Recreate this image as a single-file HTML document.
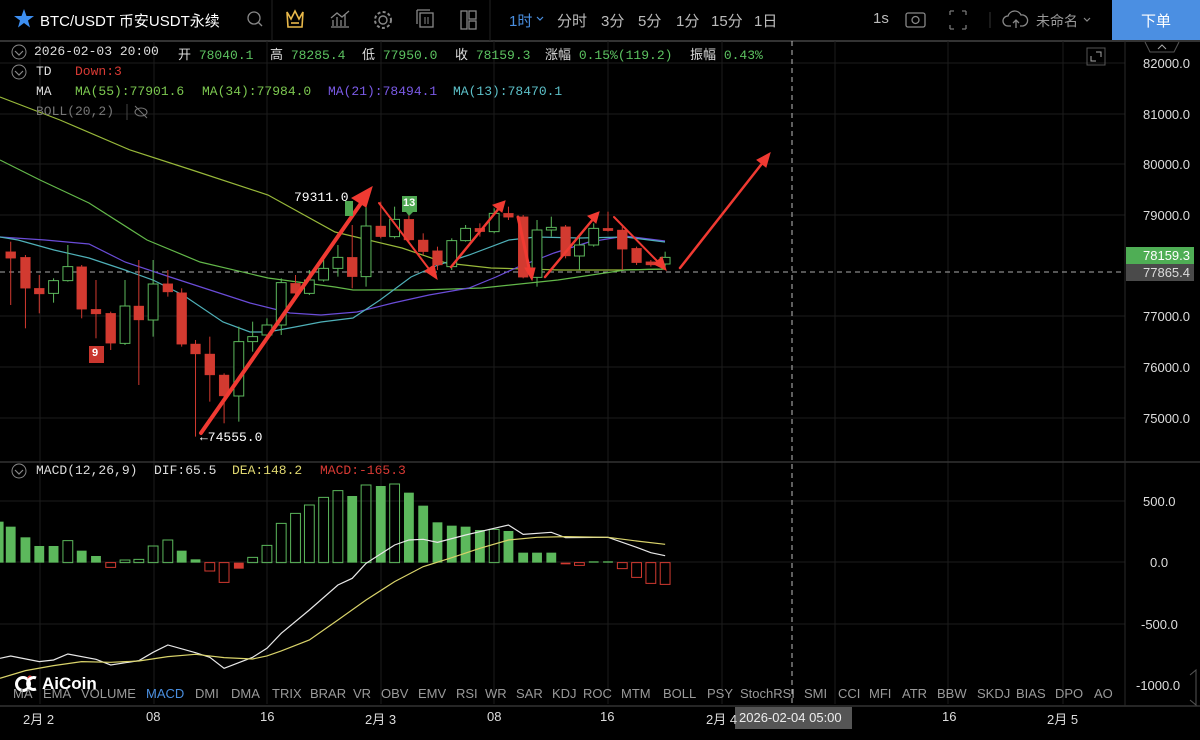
<!DOCTYPE html>
<html><head><meta charset="utf-8"><style>
*{margin:0;padding:0;box-sizing:border-box}
body{width:1200px;height:740px;background:#000;overflow:hidden;position:relative;font-family:"Liberation Sans","Noto Sans CJK SC",sans-serif;color:#ccc}
.a{position:absolute;white-space:nowrap}
.m{font-family:"Liberation Mono","Noto Sans CJK SC",monospace;font-size:13px}
.top{font-size:15px;color:#bbb}
.g{color:#5cc260}
.tab{font-size:13px;color:#9a9a9a;top:686px}
.ax{font-size:13px;color:#ddd;left:1143px}
.tl{font-size:13px;color:#ddd;top:709px}
</style></head><body>
<svg class="a" style="left:0;top:0" width="1200" height="740">
<!-- top bar borders -->
<line x1="0" y1="41" x2="1200" y2="41" stroke="#333" stroke-width="2"/>
<line x1="272" y1="0" x2="272" y2="41" stroke="#222"/>
<line x1="490" y1="0" x2="490" y2="41" stroke="#222"/>
<!-- grid -->
<g stroke="#1c1c1c" stroke-width="1">
<line x1="0" y1="63" x2="1125" y2="63"/><line x1="0" y1="114" x2="1125" y2="114"/><line x1="0" y1="164" x2="1125" y2="164"/><line x1="0" y1="215" x2="1125" y2="215"/><line x1="0" y1="316" x2="1125" y2="316"/><line x1="0" y1="367" x2="1125" y2="367"/><line x1="0" y1="418" x2="1125" y2="418"/>
<line x1="0" y1="501" x2="1125" y2="501"/><line x1="0" y1="562" x2="1125" y2="562"/><line x1="0" y1="624" x2="1125" y2="624"/>
<line x1="40" y1="41" x2="40" y2="704"/><line x1="154" y1="41" x2="154" y2="704"/><line x1="267" y1="41" x2="267" y2="704"/><line x1="381" y1="41" x2="381" y2="704"/><line x1="494" y1="41" x2="494" y2="704"/><line x1="608" y1="41" x2="608" y2="704"/><line x1="722" y1="41" x2="722" y2="704"/><line x1="835" y1="41" x2="835" y2="704"/><line x1="948" y1="41" x2="948" y2="704"/><line x1="1063" y1="41" x2="1063" y2="704"/>
</g>
<line x1="0" y1="462" x2="1200" y2="462" stroke="#333" stroke-width="1.5"/>
<line x1="0" y1="706" x2="1200" y2="706" stroke="#333" stroke-width="1.5"/>
<line x1="1125" y1="41" x2="1125" y2="706" stroke="#2a2a2a"/>
<line x1="792" y1="41" x2="792" y2="704" stroke="#bbb" stroke-dasharray="5,4"/>
<line x1="0" y1="272" x2="1125" y2="272" stroke="#aaa" stroke-dasharray="5,4"/>
<!-- MA lines -->
<g fill="none" stroke-width="1.2">
<polyline stroke="#98b83a" points="0,97 60,120 130,150 192,170 268,195 335,232 402,248 446,263 491,268 560,270 620,270 665,269"/>
<polyline stroke="#63b84a" points="0,160 40,180 89,203 147,240 200,262 268,278 335,287 353,290 420,290 482,288 558,280 625,270 665,269"/>
<polyline stroke="#6a4cd8" points="0,237 45,240 89,244 125,262 170,277 210,290 250,303 290,313 321,315 357,312 393,303 429,295 469,288 496,277 518,267 554,253 589,242 625,236 665,241"/>
<polyline stroke="#4fb0b8" points="0,237 18,240 54,250 89,258 125,270 153,280 183,295 223,322 250,332 268,332 295,327 321,322 353,318 380,300 411,277 438,265 469,255 509,240 536,237 580,238 625,237 665,242"/>
</g>
<!-- candles: x/2.24, y/3+170 -->
<g transform="translate(0,170) scale(0.4464,0.3333)">
<g stroke="#d23a30" fill="#d23a30">
<line x1="24" y1="215" x2="24" y2="405" vector-effect="non-scaling-stroke"/><rect x="13" y="245" width="22" height="20"/>
<line x1="57" y1="255" x2="57" y2="475" vector-effect="non-scaling-stroke"/><rect x="46" y="262" width="22" height="93"/>
<line x1="88" y1="315" x2="88" y2="430" vector-effect="non-scaling-stroke"/><rect x="77" y="355" width="22" height="17"/>
<line x1="183" y1="285" x2="183" y2="445" vector-effect="non-scaling-stroke"/><rect x="172" y="290" width="22" height="128"/>
<line x1="215" y1="330" x2="215" y2="505" vector-effect="non-scaling-stroke"/><rect x="204" y="418" width="22" height="14"/>
<line x1="248" y1="425" x2="248" y2="540" vector-effect="non-scaling-stroke"/><rect x="237" y="430" width="22" height="90"/>
<line x1="311" y1="270" x2="311" y2="645" vector-effect="non-scaling-stroke"/><rect x="300" y="408" width="22" height="42"/>
<line x1="376" y1="300" x2="376" y2="380" vector-effect="non-scaling-stroke"/><rect x="365" y="341" width="22" height="25"/>
<line x1="407" y1="355" x2="407" y2="530" vector-effect="non-scaling-stroke"/><rect x="396" y="368" width="22" height="155"/>
<line x1="438" y1="510" x2="438" y2="800" vector-effect="non-scaling-stroke"/><rect x="427" y="522" width="22" height="30"/>
<line x1="470" y1="500" x2="470" y2="695" vector-effect="non-scaling-stroke"/><rect x="459" y="552" width="22" height="63"/>
<line x1="502" y1="610" x2="502" y2="760" vector-effect="non-scaling-stroke"/><rect x="491" y="615" width="22" height="63"/>
<line x1="662" y1="315" x2="662" y2="375" vector-effect="non-scaling-stroke"/><rect x="651" y="340" width="22" height="30"/>
<line x1="789" y1="165" x2="789" y2="355" vector-effect="non-scaling-stroke"/><rect x="778" y="262" width="22" height="58"/>
<line x1="853" y1="95" x2="853" y2="205" vector-effect="non-scaling-stroke"/><rect x="842" y="168" width="22" height="32"/>
<line x1="916" y1="130" x2="916" y2="215" vector-effect="non-scaling-stroke"/><rect x="905" y="148" width="22" height="62"/>
<line x1="948" y1="190" x2="948" y2="255" vector-effect="non-scaling-stroke"/><rect x="937" y="210" width="22" height="35"/>
<line x1="980" y1="230" x2="980" y2="300" vector-effect="non-scaling-stroke"/><rect x="969" y="242" width="22" height="43"/>
<line x1="1075" y1="160" x2="1075" y2="200" vector-effect="non-scaling-stroke"/><rect x="1064" y="175" width="22" height="10"/>
<line x1="1139" y1="110" x2="1139" y2="150" vector-effect="non-scaling-stroke"/><rect x="1128" y="130" width="22" height="12"/>
<line x1="1172" y1="135" x2="1172" y2="325" vector-effect="non-scaling-stroke"/><rect x="1161" y="140" width="22" height="182"/>
<line x1="1267" y1="165" x2="1267" y2="265" vector-effect="non-scaling-stroke"/><rect x="1256" y="170" width="22" height="88"/>
<line x1="1362" y1="125" x2="1362" y2="185" vector-effect="non-scaling-stroke"/><rect x="1351" y="175" width="22" height="7"/>
<line x1="1394" y1="170" x2="1394" y2="300" vector-effect="non-scaling-stroke"/><rect x="1383" y="180" width="22" height="58"/>
<line x1="1426" y1="230" x2="1426" y2="285" vector-effect="non-scaling-stroke"/><rect x="1415" y="235" width="22" height="43"/>
<line x1="1458" y1="270" x2="1458" y2="290" vector-effect="non-scaling-stroke"/><rect x="1447" y="275" width="22" height="10"/>
</g>
<g stroke="#5cb85c" fill="#000" vector-effect="non-scaling-stroke">
<line x1="120" y1="325" x2="120" y2="398" vector-effect="non-scaling-stroke"/><rect x="109" y="332" width="22" height="38" vector-effect="non-scaling-stroke"/>
<line x1="152" y1="225" x2="152" y2="335" vector-effect="non-scaling-stroke"/><rect x="141" y="290" width="22" height="42" vector-effect="non-scaling-stroke"/>
<line x1="280" y1="330" x2="280" y2="525" vector-effect="non-scaling-stroke"/><rect x="269" y="408" width="22" height="112" vector-effect="non-scaling-stroke"/>
<line x1="343" y1="270" x2="343" y2="500" vector-effect="non-scaling-stroke"/><rect x="332" y="342" width="22" height="108" vector-effect="non-scaling-stroke"/>
<line x1="535" y1="470" x2="535" y2="755" vector-effect="non-scaling-stroke"/><rect x="524" y="515" width="22" height="163" vector-effect="non-scaling-stroke"/>
<line x1="566" y1="455" x2="566" y2="545" vector-effect="non-scaling-stroke"/><rect x="555" y="500" width="22" height="15" vector-effect="non-scaling-stroke"/>
<line x1="598" y1="445" x2="598" y2="500" vector-effect="non-scaling-stroke"/><rect x="587" y="465" width="22" height="30" vector-effect="non-scaling-stroke"/>
<line x1="630" y1="325" x2="630" y2="495" vector-effect="non-scaling-stroke"/><rect x="619" y="338" width="22" height="127" vector-effect="non-scaling-stroke"/>
<line x1="693" y1="300" x2="693" y2="375" vector-effect="non-scaling-stroke"/><rect x="682" y="330" width="22" height="40" vector-effect="non-scaling-stroke"/>
<line x1="725" y1="270" x2="725" y2="335" vector-effect="non-scaling-stroke"/><rect x="714" y="295" width="22" height="35" vector-effect="non-scaling-stroke"/>
<line x1="757" y1="225" x2="757" y2="320" vector-effect="non-scaling-stroke"/><rect x="746" y="262" width="22" height="33" vector-effect="non-scaling-stroke"/>
<line x1="820" y1="105" x2="820" y2="350" vector-effect="non-scaling-stroke"/><rect x="809" y="168" width="22" height="152" vector-effect="non-scaling-stroke"/>
<line x1="884" y1="110" x2="884" y2="205" vector-effect="non-scaling-stroke"/><rect x="873" y="148" width="22" height="52" vector-effect="non-scaling-stroke"/>
<line x1="1012" y1="205" x2="1012" y2="300" vector-effect="non-scaling-stroke"/><rect x="1001" y="212" width="22" height="78" vector-effect="non-scaling-stroke"/>
<line x1="1043" y1="165" x2="1043" y2="215" vector-effect="non-scaling-stroke"/><rect x="1032" y="175" width="22" height="37" vector-effect="non-scaling-stroke"/>
<line x1="1107" y1="115" x2="1107" y2="190" vector-effect="non-scaling-stroke"/><rect x="1096" y="130" width="22" height="55" vector-effect="non-scaling-stroke"/>
<line x1="1203" y1="150" x2="1203" y2="350" vector-effect="non-scaling-stroke"/><rect x="1192" y="180" width="22" height="142" vector-effect="non-scaling-stroke"/>
<line x1="1235" y1="140" x2="1235" y2="200" vector-effect="non-scaling-stroke"/><rect x="1224" y="172" width="22" height="8" vector-effect="non-scaling-stroke"/>
<line x1="1298" y1="205" x2="1298" y2="300" vector-effect="non-scaling-stroke"/><rect x="1287" y="225" width="22" height="33" vector-effect="non-scaling-stroke"/>
<line x1="1330" y1="160" x2="1330" y2="230" vector-effect="non-scaling-stroke"/><rect x="1319" y="175" width="22" height="50" vector-effect="non-scaling-stroke"/>
<line x1="1490" y1="245" x2="1490" y2="290" vector-effect="non-scaling-stroke"/><rect x="1479" y="262" width="22" height="20" vector-effect="non-scaling-stroke"/>
</g>
</g>
<!-- arrows -->
<g stroke="#f03a32" fill="#f03a32" stroke-linecap="round">
<line x1="201" y1="433" x2="364" y2="199" stroke-width="4"/><polygon points="372,187 352,198 366,207"/>
<line x1="379" y1="203" x2="432" y2="273" stroke-width="2"/><polygon points="437,279 425,271 434,265"/>
<line x1="451" y1="267" x2="500" y2="207" stroke-width="2.5"/><polygon points="505,201 493,205 502,212"/>
<line x1="518" y1="217" x2="530" y2="272" stroke-width="3"/><polygon points="532,280 525,268 535,268"/>
<line x1="545" y1="277" x2="594" y2="218" stroke-width="2.5"/><polygon points="599,212 588,216 596,223"/>
<line x1="614" y1="217" x2="660" y2="264" stroke-width="2"/><polygon points="666,270 654,264 662,257"/>
<line x1="680" y1="268" x2="764" y2="161" stroke-width="2.5"/><polygon points="770,153 757,160 766,167"/>
</g>
<!-- MACD histogram -->
<g transform="translate(0,460) scale(0.4464,0.3333)">
<g fill="#5cb85c">
<rect x="-8" y="185" width="16" height="123"/>
<rect x="13" y="200" width="22" height="108"/><rect x="46" y="232" width="22" height="76"/><rect x="77" y="258" width="22" height="50"/><rect x="109" y="258" width="22" height="50"/>
<rect x="172" y="272" width="22" height="36"/><rect x="204" y="288" width="22" height="20"/>
<rect x="396" y="272" width="22" height="36"/><rect x="427" y="298" width="22" height="10"/>
<rect x="778" y="108" width="22" height="200"/><rect x="842" y="78" width="22" height="230"/><rect x="905" y="98" width="22" height="210"/><rect x="937" y="137" width="22" height="171"/><rect x="969" y="187" width="22" height="121"/><rect x="1001" y="197" width="22" height="111"/><rect x="1032" y="200" width="22" height="108"/><rect x="1064" y="210" width="22" height="98"/><rect x="1128" y="213" width="22" height="95"/><rect x="1161" y="278" width="22" height="30"/><rect x="1192" y="278" width="22" height="30"/><rect x="1224" y="278" width="22" height="30"/><rect x="1319" y="304" width="22" height="4"/><rect x="1351" y="304" width="22" height="4"/>
</g>
<g fill="none" stroke="#5cb85c">
<rect x="141" y="242" width="22" height="66" vector-effect="non-scaling-stroke"/><rect x="269" y="300" width="22" height="8" vector-effect="non-scaling-stroke"/><rect x="300" y="298" width="22" height="10" vector-effect="non-scaling-stroke"/><rect x="332" y="258" width="22" height="50" vector-effect="non-scaling-stroke"/><rect x="365" y="240" width="22" height="68" vector-effect="non-scaling-stroke"/>
<rect x="555" y="292" width="22" height="16" vector-effect="non-scaling-stroke"/><rect x="587" y="256" width="22" height="52" vector-effect="non-scaling-stroke"/><rect x="619" y="190" width="22" height="118" vector-effect="non-scaling-stroke"/><rect x="651" y="160" width="22" height="148" vector-effect="non-scaling-stroke"/><rect x="682" y="135" width="22" height="173" vector-effect="non-scaling-stroke"/><rect x="714" y="112" width="22" height="196" vector-effect="non-scaling-stroke"/><rect x="746" y="92" width="22" height="216" vector-effect="non-scaling-stroke"/><rect x="809" y="75" width="22" height="233" vector-effect="non-scaling-stroke"/><rect x="873" y="72" width="22" height="236" vector-effect="non-scaling-stroke"/><rect x="1096" y="208" width="22" height="100" vector-effect="non-scaling-stroke"/>
</g>
<g fill="none" stroke="#d23a30">
<rect x="237" y="308" width="22" height="14" vector-effect="non-scaling-stroke"/><rect x="459" y="308" width="22" height="25" vector-effect="non-scaling-stroke"/><rect x="491" y="308" width="22" height="59" vector-effect="non-scaling-stroke"/><rect x="1287" y="308" width="22" height="8" vector-effect="non-scaling-stroke"/><rect x="1383" y="308" width="22" height="18" vector-effect="non-scaling-stroke"/><rect x="1415" y="308" width="22" height="44" vector-effect="non-scaling-stroke"/><rect x="1447" y="308" width="22" height="62" vector-effect="non-scaling-stroke"/><rect x="1479" y="308" width="22" height="65" vector-effect="non-scaling-stroke"/>
</g>
<g fill="#d23a30"><rect x="524" y="308" width="22" height="18"/><rect x="1256" y="308" width="22" height="5"/></g>
<polyline fill="none" stroke="#e8e8e8" stroke-width="1.2" vector-effect="non-scaling-stroke" points="0,595 24,588 88,605 120,600 152,582 215,598 248,615 311,602 343,577 376,555 438,578 470,592 502,625 566,592 598,565 630,520 693,450 757,375 789,355 820,310 884,255 916,240 948,238 980,247 1043,225 1107,205 1139,195 1172,223 1235,217 1267,233 1362,232 1426,262 1458,278 1490,287"/>
<polyline fill="none" stroke="#d9d36a" stroke-width="1.2" vector-effect="non-scaling-stroke" points="0,655 57,632 120,617 183,605 248,607 311,603 376,590 438,583 502,593 566,597 598,588 630,573 693,540 757,480 820,420 884,365 948,320 1012,293 1075,265 1139,240 1203,232 1267,230 1362,232 1426,243 1490,253"/>
</g>
<!-- markers -->
<rect x="89" y="346" width="15" height="17" fill="#c9362e"/>
<rect x="402" y="196" width="15" height="16" fill="#4fa852"/><polygon points="406,212 413,212 409,216" fill="#4fa852"/>
<rect x="345" y="201" width="8" height="15" fill="#4fa852"/>
<!-- price tags -->
<rect x="1126" y="247" width="68" height="17" fill="#4fae55"/>
<rect x="1126" y="264" width="68" height="17" fill="#4a4a4a"/>
<rect x="735" y="707" width="117" height="22" fill="#555"/>
<!-- legend circles -->
<g fill="none" stroke="#888"><circle cx="19" cy="52" r="7"/><circle cx="19" cy="72" r="7"/><circle cx="19" cy="471" r="7"/></g>
<g fill="none" stroke="#888" stroke-width="1.2"><polyline points="15,51 19,55 23,51"/><polyline points="15,71 19,75 23,71"/><polyline points="15,470 19,474 23,470"/></g>
<line x1="127" y1="104" x2="127" y2="120" stroke="#444"/>
<ellipse cx="141" cy="112" rx="6" ry="4" fill="none" stroke="#777"/><line x1="135" y1="106" x2="147" y2="118" stroke="#777"/>
<!-- top icons -->
<polygon points="24,9 26.5,16 34,16 28,20.5 30,27.5 24,23 18,27.5 20,20.5 14,16 21.5,16" fill="#3d8ef0"/>
<circle cx="254" cy="18" r="6" fill="none" stroke="#888" stroke-width="1.3"/><line x1="258" y1="22" x2="262" y2="26" stroke="#888" stroke-width="1.3"/>
<path d="M287 12 L291 19 L295 11 L299 19 L303 12 L302 27 L288 27 Z" fill="none" stroke="#e8b84a" stroke-width="1.6"/><line x1="291" y1="23" x2="299" y2="23" stroke="#e8b84a" stroke-width="1.6"/>
<path d="M331 27 L349 27 M333 26 V20 M337 26 V17 M341 26 V20 M345 26 V15 M331 18 L337 13 L342 17 L349 11" fill="none" stroke="#888" stroke-width="1.3"/>
<circle cx="383" cy="20" r="4" fill="none" stroke="#888" stroke-width="1.4"/><circle cx="383" cy="20" r="8" fill="none" stroke="#888" stroke-width="2" stroke-dasharray="3,2.3"/>
<rect x="420" y="13" width="13" height="14" fill="none" stroke="#888" stroke-width="1.3"/><path d="M417 10 H430 M417 10 V24" stroke="#888" stroke-width="1.3" fill="none"/><line x1="425" y1="17" x2="425" y2="24" stroke="#888"/><line x1="428" y1="17" x2="428" y2="24" stroke="#888"/>
<rect x="461" y="11" width="6" height="18" fill="none" stroke="#888" stroke-width="1.3"/><rect x="469" y="11" width="7" height="8" fill="none" stroke="#888" stroke-width="1.3"/><rect x="469" y="21" width="7" height="8" fill="none" stroke="#888" stroke-width="1.3"/>
<polyline points="537,17 540,20 543,17" fill="none" stroke="#4a8fe0" stroke-width="1.2"/>
<rect x="906" y="13" width="19" height="14" rx="2" fill="none" stroke="#888" stroke-width="1.3"/><circle cx="915.5" cy="20" r="3.5" fill="none" stroke="#888" stroke-width="1.3"/>
<path d="M950 11 h4 M950 11 v4 M966 11 h-4 M966 11 v4 M950 29 h4 M950 29 v-4 M966 29 h-4 M966 29 v-4" stroke="#777" stroke-width="1.3"/>
<line x1="990" y1="12" x2="990" y2="28" stroke="#333"/>
<path d="M1011 26 h-3 a5 5 0 0 1 0-10 a7 7 0 0 1 13-1 a5 5 0 0 1 2 11 h-3" fill="none" stroke="#888" stroke-width="1.3"/><path d="M1016 28 v-8 M1013 23 l3-3 3 3" fill="none" stroke="#888" stroke-width="1.3"/>
<polyline points="1084,18 1087,21 1090,18" fill="none" stroke="#888" stroke-width="1.2"/>
<rect x="1112" y="0" width="88" height="40" fill="#4b8fe2"/>
<path d="M1145 42 L1150 52 H1174 L1179 42" fill="none" stroke="#555"/><polyline points="1158,49 1162,45 1166,49" fill="none" stroke="#aaa"/>
<rect x="1087" y="48" width="18" height="17" fill="none" stroke="#555"/><path d="M1096 52 h5 v5 M1091 56 v5 h5" fill="none" stroke="#aaa"/>
<path d="M1190 675 L1196 670 V705 L1190 700" fill="none" stroke="#555"/>
<!-- AiCoin logo -->
<circle cx="23" cy="684" r="6.5" fill="none" stroke="#fff" stroke-width="3"/><circle cx="30" cy="678" r="2.5" fill="#e03a3a"/><path d="M36 678 a6 6 0 1 0 0 11" fill="none" stroke="#fff" stroke-width="3"/>
</svg>

<div class="a top" style="left:40px;top:10px;color:#fff">BTC/USDT 币安USDT永续</div>
<div class="a top" style="left:509px;top:10px;color:#4a8fe0">1时</div>
<div class="a top" style="left:557px;top:10px">分时</div>
<div class="a top" style="left:601px;top:10px">3分</div>
<div class="a top" style="left:638px;top:10px">5分</div>
<div class="a top" style="left:676px;top:10px">1分</div>
<div class="a top" style="left:711px;top:10px">15分</div>
<div class="a top" style="left:754px;top:10px">1日</div>
<div class="a top" style="left:873px;top:10px">1s</div>
<div class="a" style="left:1036px;top:11px;font-size:14px;color:#999">未命名</div>
<div class="a" style="left:1141px;top:10px;font-size:15px;color:#fff">下单</div>

<div class="a m" style="left:34px;top:44px;color:#ddd">2026-02-03 20:00</div>
<div class="a m" style="left:178px;top:44px;color:#ddd">开 <span class="g">78040.1</span></div>
<div class="a m" style="left:270px;top:44px;color:#ddd">高 <span class="g">78285.4</span></div>
<div class="a m" style="left:362px;top:44px;color:#ddd">低 <span class="g">77950.0</span></div>
<div class="a m" style="left:455px;top:44px;color:#ddd">收 <span class="g">78159.3</span></div>
<div class="a m" style="left:545px;top:44px;color:#ddd">涨幅 <span class="g">0.15%(119.2)</span></div>
<div class="a m" style="left:690px;top:44px;color:#ddd">振幅 <span class="g">0.43%</span></div>
<div class="a m" style="left:36px;top:64px;color:#ddd">TD</div>
<div class="a m" style="left:75px;top:64px;color:#d83a34">Down:3</div>
<div class="a m" style="left:36px;top:84px;color:#ddd">MA</div>
<div class="a m" style="left:75px;top:84px;color:#7cc850">MA(55):77901.6</div>
<div class="a m" style="left:202px;top:84px;color:#7cc850">MA(34):77984.0</div>
<div class="a m" style="left:328px;top:84px;color:#7a5ae6">MA(21):78494.1</div>
<div class="a m" style="left:453px;top:84px;color:#5cc0c8">MA(13):78470.1</div>
<div class="a m" style="left:36px;top:104px;color:#777">BOLL(20,2)</div>
<div class="a m" style="left:36px;top:463px;color:#ddd">MACD(12,26,9)</div>
<div class="a m" style="left:154px;top:463px;color:#ddd">DIF:65.5</div>
<div class="a m" style="left:232px;top:463px;color:#e0d870">DEA:148.2</div>
<div class="a m" style="left:320px;top:463px;color:#d83a34">MACD:-165.3</div>

<div class="a m" style="left:294px;top:190px;color:#fff">79311.0</div>
<div class="a m" style="left:200px;top:430px;color:#fff">←74555.0</div>
<div class="a" style="left:92px;top:347px;font-size:11px;color:#fff;font-weight:bold">9</div>
<div class="a" style="left:403px;top:197px;font-size:11px;color:#fff;font-weight:bold">13</div>

<div class="a ax" style="top:56px">82000.0</div>
<div class="a ax" style="top:107px">81000.0</div>
<div class="a ax" style="top:157px">80000.0</div>
<div class="a ax" style="top:208px">79000.0</div>
<div class="a ax" style="top:248px;color:#fff">78159.3</div>
<div class="a ax" style="top:265px">77865.4</div>
<div class="a ax" style="top:309px">77000.0</div>
<div class="a ax" style="top:360px">76000.0</div>
<div class="a ax" style="top:411px">75000.0</div>
<div class="a ax" style="top:494px;left:1143px">500.0</div>
<div class="a ax" style="top:555px;left:1150px">0.0</div>
<div class="a ax" style="top:617px;left:1141px">-500.0</div>
<div class="a ax" style="top:678px;left:1136px">-1000.0</div>

<div class="a" style="left:42px;top:674px;font-size:17px;color:#fff;font-weight:bold">AiCoin</div>
<div class="a tab" style="left:13px">MA</div>
<div class="a tab" style="left:43px">EMA</div>
<div class="a tab" style="left:81px">VOLUME</div>
<div class="a tab" style="left:146px;color:#4a8fe0">MACD</div>
<div class="a tab" style="left:195px">DMI</div>
<div class="a tab" style="left:231px">DMA</div>
<div class="a tab" style="left:272px">TRIX</div>
<div class="a tab" style="left:310px">BRAR</div>
<div class="a tab" style="left:353px">VR</div>
<div class="a tab" style="left:381px">OBV</div>
<div class="a tab" style="left:418px">EMV</div>
<div class="a tab" style="left:456px">RSI</div>
<div class="a tab" style="left:485px">WR</div>
<div class="a tab" style="left:516px">SAR</div>
<div class="a tab" style="left:552px">KDJ</div>
<div class="a tab" style="left:583px">ROC</div>
<div class="a tab" style="left:621px">MTM</div>
<div class="a tab" style="left:663px">BOLL</div>
<div class="a tab" style="left:707px">PSY</div>
<div class="a tab" style="left:740px">StochRSI</div>
<div class="a tab" style="left:804px">SMI</div>
<div class="a tab" style="left:838px">CCI</div>
<div class="a tab" style="left:869px">MFI</div>
<div class="a tab" style="left:902px">ATR</div>
<div class="a tab" style="left:937px">BBW</div>
<div class="a tab" style="left:977px">SKDJ</div>
<div class="a tab" style="left:1016px">BIAS</div>
<div class="a tab" style="left:1055px">DPO</div>
<div class="a tab" style="left:1094px">AO</div>

<div class="a tl" style="left:23px">2月 2</div>
<div class="a tl" style="left:146px">08</div>
<div class="a tl" style="left:260px">16</div>
<div class="a tl" style="left:365px">2月 3</div>
<div class="a tl" style="left:487px">08</div>
<div class="a tl" style="left:600px">16</div>
<div class="a tl" style="left:706px">2月 4</div>
<div class="a tl" style="left:739px;top:710px;color:#eee">2026-02-04 05:00</div>
<div class="a tl" style="left:942px">16</div>
<div class="a tl" style="left:1047px">2月 5</div>
</body></html>
